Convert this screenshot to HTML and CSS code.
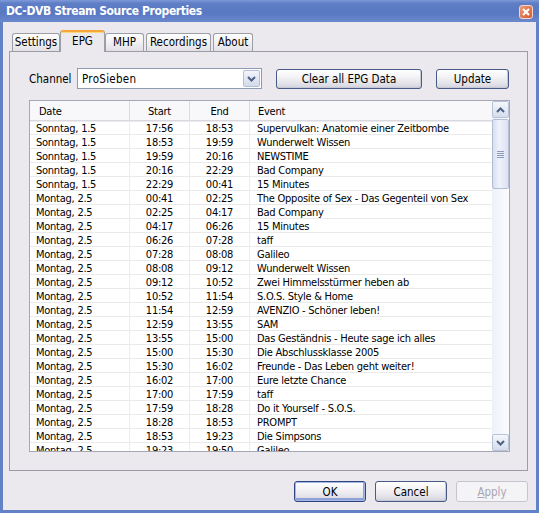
FILE: index.html
```html
<!DOCTYPE html>
<html lang="en">
<head>
  <meta charset="UTF-8">
  <title>DC-DVB Stream Source Properties</title>
<link rel="stylesheet" href="styles.css">
</head>
<body>
  <div class="window">
    <div class="titlebar">
      <span class="title">DC-DVB Stream Source Properties</span>
      <span class="close">
        <svg width="8" height="8" viewBox="0 0 8 8"><path d="M1 1 L7 7 M7 1 L1 7" stroke="#fff" stroke-width="2"/></svg>
      </span>
    </div>
    <div class="client">
      <div class="tabs">
        <div class="tab settings">Settings</div>
        <div class="tab active epg">EPG</div>
        <div class="tab mhp">MHP</div>
        <div class="tab recordings">Recordings</div>
        <div class="tab about">About</div>
      </div>
      <div class="pane">
        <div class="channel-row">
          <label class="channel-label">Channel</label>
          <div class="select">
            <span class="select-text">ProSieben</span>
            <span class="select-btn">
              <svg width="9" height="6" viewBox="0 0 9 6"><path d="M1 1 L4.5 4.5 L8 1" fill="none" stroke="#4d6185" stroke-width="2"/></svg>
            </span>
          </div>
          <button class="btn clear">Clear all EPG Data</button>
          <button class="btn update">Update</button>
        </div>

        <div class="list">
          <div class="list-main">
            <div class="list-head">
              <div class="col date">Date</div>
              <div class="col start">Start</div>
              <div class="col end">End</div>
              <div class="col event">Event</div>
            </div>
            <div class="list-body">
              <div class="row"><div class="col date">Sonntag, 1.5</div><div class="col start">17:56</div><div class="col end">18:53</div><div class="col event">Supervulkan: Anatomie einer Zeitbombe</div></div>
              <div class="row"><div class="col date">Sonntag, 1.5</div><div class="col start">18:53</div><div class="col end">19:59</div><div class="col event">Wunderwelt Wissen</div></div>
              <div class="row"><div class="col date">Sonntag, 1.5</div><div class="col start">19:59</div><div class="col end">20:16</div><div class="col event">NEWSTIME</div></div>
              <div class="row"><div class="col date">Sonntag, 1.5</div><div class="col start">20:16</div><div class="col end">22:29</div><div class="col event">Bad Company</div></div>
              <div class="row"><div class="col date">Sonntag, 1.5</div><div class="col start">22:29</div><div class="col end">00:41</div><div class="col event">15 Minutes</div></div>
              <div class="row"><div class="col date">Montag, 2.5</div><div class="col start">00:41</div><div class="col end">02:25</div><div class="col event">The Opposite of Sex - Das Gegenteil von Sex</div></div>
              <div class="row"><div class="col date">Montag, 2.5</div><div class="col start">02:25</div><div class="col end">04:17</div><div class="col event">Bad Company</div></div>
              <div class="row"><div class="col date">Montag, 2.5</div><div class="col start">04:17</div><div class="col end">06:26</div><div class="col event">15 Minutes</div></div>
              <div class="row"><div class="col date">Montag, 2.5</div><div class="col start">06:26</div><div class="col end">07:28</div><div class="col event">taff</div></div>
              <div class="row"><div class="col date">Montag, 2.5</div><div class="col start">07:28</div><div class="col end">08:08</div><div class="col event">Galileo</div></div>
              <div class="row"><div class="col date">Montag, 2.5</div><div class="col start">08:08</div><div class="col end">09:12</div><div class="col event">Wunderwelt Wissen</div></div>
              <div class="row"><div class="col date">Montag, 2.5</div><div class="col start">09:12</div><div class="col end">10:52</div><div class="col event">Zwei Himmelsstürmer heben ab</div></div>
              <div class="row"><div class="col date">Montag, 2.5</div><div class="col start">10:52</div><div class="col end">11:54</div><div class="col event">S.O.S. Style &amp; Home</div></div>
              <div class="row"><div class="col date">Montag, 2.5</div><div class="col start">11:54</div><div class="col end">12:59</div><div class="col event">AVENZIO - Schöner leben!</div></div>
              <div class="row"><div class="col date">Montag, 2.5</div><div class="col start">12:59</div><div class="col end">13:55</div><div class="col event">SAM</div></div>
              <div class="row"><div class="col date">Montag, 2.5</div><div class="col start">13:55</div><div class="col end">15:00</div><div class="col event">Das Geständnis - Heute sage ich alles</div></div>
              <div class="row"><div class="col date">Montag, 2.5</div><div class="col start">15:00</div><div class="col end">15:30</div><div class="col event">Die Abschlussklasse 2005</div></div>
              <div class="row"><div class="col date">Montag, 2.5</div><div class="col start">15:30</div><div class="col end">16:02</div><div class="col event">Freunde - Das Leben geht weiter!</div></div>
              <div class="row"><div class="col date">Montag, 2.5</div><div class="col start">16:02</div><div class="col end">17:00</div><div class="col event">Eure letzte Chance</div></div>
              <div class="row"><div class="col date">Montag, 2.5</div><div class="col start">17:00</div><div class="col end">17:59</div><div class="col event">taff</div></div>
              <div class="row"><div class="col date">Montag, 2.5</div><div class="col start">17:59</div><div class="col end">18:28</div><div class="col event">Do it Yourself - S.O.S.</div></div>
              <div class="row"><div class="col date">Montag, 2.5</div><div class="col start">18:28</div><div class="col end">18:53</div><div class="col event">PROMPT</div></div>
              <div class="row"><div class="col date">Montag, 2.5</div><div class="col start">18:53</div><div class="col end">19:23</div><div class="col event">Die Simpsons</div></div>
              <div class="row"><div class="col date">Montag, 2.5</div><div class="col start">19:23</div><div class="col end">19:50</div><div class="col event">Galileo</div></div>
            </div>
          </div>
          <div class="scrollbar">
            <div class="sb-btn">
              <svg width="9" height="6" viewBox="0 0 9 6"><path d="M1 5 L4.5 1.5 L8 5" fill="none" stroke="#4d6185" stroke-width="2"/></svg>
            </div>
            <div class="sb-track">
              <div class="sb-thumb">
                <span class="grip"></span>
              </div>
            </div>
            <div class="sb-btn">
              <svg width="9" height="6" viewBox="0 0 9 6"><path d="M1 1 L4.5 4.5 L8 1" fill="none" stroke="#4d6185" stroke-width="2"/></svg>
            </div>
          </div>
        </div>
      </div>

      <div class="footer">
        <button class="btn dlg default">OK</button>
        <button class="btn dlg">Cancel</button>
        <button class="btn dlg" disabled><u>A</u>pply</button>
      </div>
    </div>
  </div>
</body>
</html>
```

FILE: styles.css
```css
* {
  margin: 0;
  padding: 0;
  box-sizing: border-box;
}
body {
  font-family: "DejaVu Sans Condensed", "DejaVu Sans", sans-serif;
  font-size: 11px;
  color: #000;
  background: #ebe9ed;
}
.window {
  width: 539px;
  height: 513px;
  display: flex;
  flex-direction: column;
  background: #6281c6;
  padding: 0 3px 3px 3px;
}
.titlebar {
  height: 22px;
  margin: 0 -3px;
  display: flex;
  align-items: center;
  justify-content: space-between;
  padding: 0 6px 0 6px;
  background: linear-gradient(to bottom, #7f9ad8 0%, #5f7ec6 15%, #5878c2 60%, #6a88cc 100%);
}
.title {
  color: #fff;
  font-weight: bold;
  font-size: 12px;
  letter-spacing: -0.4px;
}
.close {
  width: 14px;
  height: 14px;
  border: 1px solid #f3d7cc;
  border-radius: 3px;
  background: linear-gradient(135deg, #ec9a78, #d65a34);
  display: flex;
  align-items: center;
  justify-content: center;
  margin-top: 2px;
}
.client {
  flex: 1;
  background: #ebe9ed;
  padding: 8px 8px 8px 6px;
  display: flex;
  flex-direction: column;
}

/* tabs */
.tabs {
  display: flex;
  align-items: flex-end;
  height: 21px;
  padding-left: 3px;
}
.tab {
  height: 18px;
  border: 1px solid #9c9ea6;
  border-bottom: none;
  border-radius: 3px 3px 0 0;
  background: linear-gradient(to bottom, #ffffff, #eeedf0 60%, #e2e0e6);
  text-align: center;
  line-height: 17px;
  font-size: 11.5px;
}
.tab.settings { width: 48px; }
.tab.epg { width: 45px; }
.tab.mhp { width: 39px; }
.tab.recordings { width: 65px; margin-left: 2px; }
.tab.about { width: 40px; margin-left: 2px; }
.tab.active {
  height: 22px;
  margin-bottom: -1px;
  background: #ebe9ed;
  border-top: 2px solid #f4a83c;
  box-shadow: inset 0 1px 0 #ffd77b;
  line-height: 18px;
  position: relative;
  z-index: 1;
}
.pane {
  height: 420px;
  border: 1px solid #9a9da5;
  background: #ebe9ed;
  padding: 16px 17px 0 19px;
}

/* channel row */
.channel-row {
  display: flex;
  align-items: center;
  height: 21px;
}
.channel-label {
  width: 48px;
  font-size: 11.5px;
  padding-top: 1px;
}
.select {
  width: 185px;
  height: 21px;
  background: #fff;
  border: 1px solid #8f9bb0;
  display: flex;
  align-items: center;
  justify-content: space-between;
  padding: 0 1px 0 4px;
}
.select-text {
  font-size: 11.5px;
  letter-spacing: 0.3px;
  padding-top: 1px;
}
.select-btn {
  width: 17px;
  height: 17px;
  border: 1px solid #b5bfd3;
  border-radius: 2px;
  background: linear-gradient(to bottom, #f3f5fb, #d3dae9);
  display: flex;
  align-items: center;
  justify-content: center;
}
.btn {
  font-family: inherit;
  font-size: 11.5px;
  color: #000;
  height: 20px;
  border: 1px solid #485a85;
  border-radius: 3px;
  background: linear-gradient(to bottom, #ffffff 0%, #f3f3f6 40%, #dedde5 85%, #cfd0da 100%);
  box-shadow: inset -1px -1px 0 #c7c9d6;
}
.btn.clear {
  width: 146px;
  margin-left: 14px;
}
.btn.update {
  width: 73px;
  margin-left: 14px;
}

/* list view */
.list {
  margin-top: 11px;
  width: 481px;
  height: 352px;
  border: 1px solid #a3a8b4;
  background: #fff;
  display: flex;
}
.list-main {
  width: 462px;
  overflow: hidden;
}
.list-head {
  display: flex;
  height: 20px;
  background: #f8f8fa;
  border-bottom: 1px solid #d9d8de;
  box-shadow: 0 1px 0 #ececf0;
  position: relative;
}
.list-head .col {
  line-height: 17px;
  padding-top: 2px;
  border-right: 1px solid #dcdbe0;
}
.list-body {
  height: 330px;
  overflow: hidden;
}
.row {
  display: flex;
  height: 14px;
  border-bottom: 1px solid #eaeaea;
  overflow: hidden;
}
.col {
  line-height: 13px;
  padding-top: 1px;
  white-space: nowrap;
  overflow: hidden;
  border-right: 1px solid #ececec;
  letter-spacing: -0.25px;
}
.col.date { width: 100px; padding-left: 6px; }
.col.start { width: 60px; text-align: center; }
.col.end { width: 60px; text-align: center; }
.col.event { width: 242px; padding-left: 7px; border-right: none; }
.list-head .col.date { padding-left: 9px; }
.list-head .col.event { padding-left: 8px; border-right: none; }

/* scrollbar */
.scrollbar {
  width: 17px;
  display: flex;
  flex-direction: column;
  background: linear-gradient(to right, #eef1f9, #fbfcff);
}
.sb-btn {
  height: 17px;
  border: 1px solid #b8c2d7;
  border-radius: 2px;
  background: linear-gradient(to bottom, #f5f7fc, #d5dcec);
  display: flex;
  align-items: center;
  justify-content: center;
}
.sb-track {
  flex: 1;
  padding-top: 1px;
}
.sb-thumb {
  height: 70px;
  border: 1px solid #b3bdd3;
  border-radius: 2px;
  background: linear-gradient(to right, #d6def0, #eef2fb 40%, #dbe2f2);
  display: flex;
  align-items: center;
  justify-content: center;
}
.grip {
  width: 7px;
  height: 7px;
  background: repeating-linear-gradient(to bottom, #8d9ab9 0, #8d9ab9 1px, transparent 1px, transparent 2px);
}

/* dialog buttons */
.footer {
  margin-top: 10px;
  display: flex;
  justify-content: flex-end;
  gap: 9px;
}
.btn.dlg {
  width: 72px;
  height: 21px;
}
.btn.default {
  border-color: #2e4583;
  box-shadow: inset 0 0 0 1px #a6b8e2, inset -1px -2px 0 1px #8ca2d8;
}
.btn:disabled {
  color: #aaa6b0;
  border-color: #c7c5cc;
  background: #f4f3f6;
  box-shadow: none;
}
```
